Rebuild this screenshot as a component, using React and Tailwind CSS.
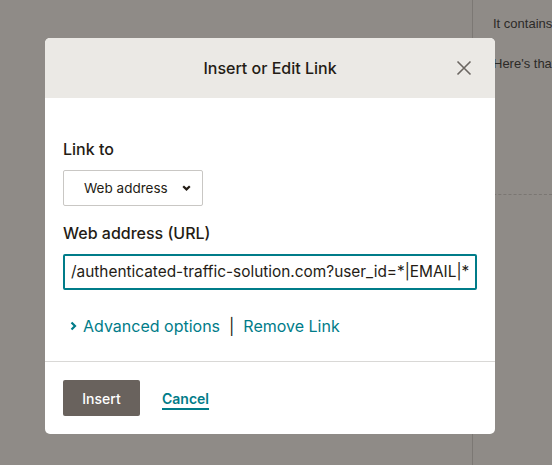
import React from 'react';

function CloseIcon() {
  return (
    <svg width="16" height="16" viewBox="0 0 16 16" fill="none" stroke="#6b6661" strokeWidth="1.6">
      <path d="M1.5 1.5 L14.5 14.5 M14.5 1.5 L1.5 14.5" />
    </svg>
  );
}

function ChevronDown() {
  return (
    <svg width="9" height="6" viewBox="0 0 9 6" fill="none" stroke="#241c15" strokeWidth="2.2">
      <path d="M1.2 1.2 L4.5 4.4 L7.8 1.2" />
    </svg>
  );
}

function ChevronRight() {
  return (
    <svg width="7" height="10" viewBox="0 0 7 10" fill="none" stroke="#007c89" strokeWidth="2.2">
      <path d="M1.5 1.5 L5 5 L1.5 8.5" />
    </svg>
  );
}

export default function App() {
  return (
    <div className="relative w-[552px] h-[465px] overflow-hidden bg-[#8f8b87] font-['Inter',sans-serif]">
      {/* page behind the overlay */}
      <div className="flex h-full font-['Liberation_Sans',Arial,sans-serif]">
        <div className="w-[473px] shrink-0 border-r border-[#7c7874]"></div>
        <div className="flex-1 min-w-0 flex flex-col">
          <p className="pl-[20px] pt-[14px] text-[13px] leading-[20px] text-[#2c2a27] whitespace-nowrap">It contains</p>
          <p className="pl-[20px] pt-[20px] text-[13px] leading-[20px] text-[#2c2a27] whitespace-nowrap">Here's that</p>
          <div className="mt-[120px] border-t border-dashed border-[#7a7672]"></div>
        </div>
      </div>

      {/* modal */}
      <div className="absolute left-[45px] top-[38px] w-[450px] h-[396px] bg-white rounded-[5px] overflow-hidden flex flex-col">
        <div className="h-[60px] bg-[#ebe9e5] flex items-center justify-center relative shrink-0">
          <h2 className="text-[16px] font-medium text-[#241c15]">Insert or Edit Link</h2>
          <button className="absolute right-[23px] top-[22px]">
            <CloseIcon />
          </button>
        </div>

        <div className="px-[18px] pt-[39px] pb-[23px] border-b border-[#d9d8d6]">
          <label className="block text-[16px] leading-[24px] font-medium text-[#241c15]">Link to</label>
          <div className="mt-[9px] w-[140px] h-[36px] border border-[#c9c7c4] rounded-[2px] flex items-center pl-[20px] gap-[14px]">
            <span className="text-[13.5px] text-[#241c15]">Web address</span>
            <ChevronDown />
          </div>
          <label className="block mt-[15px] text-[16px] leading-[24px] font-medium text-[#241c15]">Web address (URL)</label>
          <div className="mt-[9px] w-[414px] h-[36px] border-2 border-[#007c89] rounded-[2px] flex items-center pl-[6px] overflow-hidden">
            <span className="text-[15.4px] text-[#241c15] whitespace-nowrap">/authenticated-traffic-solution.com?user_id=*|EMAIL|*</span>
          </div>
          <div className="mt-[24px] h-[24px] flex items-center text-[16px] text-[#007c89]">
            <span className="ml-[7px] mr-[6px] flex items-center"><ChevronRight /></span>
            <span>Advanced options</span>
            <span className="mx-[9px] text-[#241c15]">|</span>
            <span>Remove Link</span>
          </div>
        </div>

        <div className="px-[18px] pt-[18px] flex items-center">
          <button className="w-[77px] h-[36px] bg-[#69625d] rounded-[2px] text-white text-[14px] font-medium">Insert</button>
          <a className="ml-[22px] text-[14px] font-semibold text-[#007c89] underline underline-offset-[4px] decoration-[1.5px]">Cancel</a>
        </div>
      </div>
    </div>
  );
}
